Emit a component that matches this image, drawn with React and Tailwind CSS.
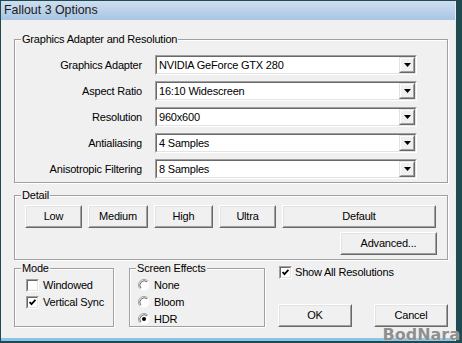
const outerSunken =
  'border border-t-[#a0a0a0] border-l-[#a0a0a0] border-b-white border-r-white';
const innerSunken =
  'border border-t-[#696969] border-l-[#696969] border-b-[#e3e3e3] border-r-[#e3e3e3]';

function DropButton() {
  return (
    <div className="w-[16px] h-full bg-[#f0f0f0] border border-t-[#e3e3e3] border-l-[#e3e3e3] border-b-[#696969] border-r-[#696969]">
      <div className="h-full flex items-center justify-center border border-t-white border-l-white border-b-[#a0a0a0] border-r-[#a0a0a0]">
        <svg width="7" height="4" viewBox="0 0 7 4">
          <polygon points="0,0 7,0 3.5,4" fill="#000" />
        </svg>
      </div>
    </div>
  );
}

function Combo({ value }) {
  return (
    <div className={`h-[20px] ${outerSunken}`}>
      <div className={`h-full flex bg-white ${innerSunken}`}>
        <span className="flex-1 pl-[2px] leading-[16px] text-[11px] tracking-[-0.2px] text-black">
          {value}
        </span>
        <DropButton />
      </div>
    </div>
  );
}

function Button({ children, className = '' }) {
  return (
    <div
      className={`h-[23px] bg-[#f0f0f0] border border-t-white border-l-white border-b-[#696969] border-r-[#696969] ${className}`}
    >
      <div className="h-full flex items-center justify-center border border-t-[#e3e3e3] border-l-[#e3e3e3] border-b-[#a0a0a0] border-r-[#a0a0a0] text-[11px] tracking-[-0.2px] text-black">
        {children}
      </div>
    </div>
  );
}

function CheckBox({ checked }) {
  return (
    <div className={`w-[13px] h-[13px] shrink-0 ${outerSunken}`}>
      <div className={`w-full h-full bg-white flex items-center justify-center ${innerSunken}`}>
        {checked && (
          <svg width="7" height="7" viewBox="0 0 7 7">
            <polyline points="0.5,3 2.5,5.2 6.5,0.8" fill="none" stroke="#000" strokeWidth="1.8" />
          </svg>
        )}
      </div>
    </div>
  );
}

function Radio({ checked }) {
  return (
    <svg width="12" height="12" viewBox="0 0 12 12" className="shrink-0">
      <circle cx="6" cy="6" r="5.5" fill="#fff" />
      <path d="M2.1 9.9 A5.5 5.5 0 0 1 9.9 2.1" fill="none" stroke="#a0a0a0" strokeWidth="1" />
      <path d="M2.9 9.1 A4.4 4.4 0 0 1 9.1 2.9" fill="none" stroke="#696969" strokeWidth="1" />
      {checked && <circle cx="6" cy="6" r="2" fill="#000" />}
    </svg>
  );
}

const legendCls =
  'ml-[6px] px-[1px] bg-[#f0f0f0] leading-[14px] text-[11px] tracking-[-0.2px] text-black';
const groupCls =
  'border border-[#a0a0a0] shadow-[inset_1px_1px_0_#fff,1px_1px_0_#fff]';

const rows = [
  ['Graphics Adapter', 'NVIDIA GeForce GTX 280'],
  ['Aspect Ratio', '16:10 Widescreen'],
  ['Resolution', '960x600'],
  ['Antialiasing', '4 Samples'],
  ['Anisotropic Filtering', '8 Samples'],
];

export default function App() {
  return (
    <div className="relative w-[462px] h-[343px] bg-[#1f4a50] pl-[1px] pr-[6px] pt-[1px] pb-[2px] font-['Liberation_Sans',Arial,sans-serif] overflow-hidden">
      <div className="h-full flex flex-col border-r border-r-[#e6ecef]">
        {/* title bar */}
        <div className="h-[19px] bg-gradient-to-b from-[#cddef0] to-[#a9c5e3] pl-[3px] leading-[19px] text-[12.4px] text-[#1b1b1b]">
          Fallout 3 Options
        </div>

        {/* client area */}
        <div className="h-[318px] bg-[#f0f0f0] pl-[13px] pt-[12px]">
          <fieldset className={`w-[434px] pb-[3px] ${groupCls}`}>
            <legend className={legendCls}>Graphics Adapter and Resolution</legend>
            <div className="grid grid-cols-[127px_262px] gap-x-[13px] gap-y-[6px] pt-[9px] items-center">
              {rows.map(([label, value]) => (
                <div key={label} className="contents">
                  <span className="text-right text-[11px] tracking-[-0.2px] text-black">{label}</span>
                  <Combo value={value} />
                </div>
              ))}
            </div>
          </fieldset>

          <fieldset className={`w-[434px] mt-[5px] pb-[4px] ${groupCls}`}>
            <legend className={legendCls}>Detail</legend>
            <div className="flex gap-[6px] pl-[10px] pt-[3px]">
              <Button className="w-[57px]">Low</Button>
              <Button className="w-[60px]">Medium</Button>
              <Button className="w-[59px]">High</Button>
              <Button className="w-[57px]">Ultra</Button>
              <Button className="w-[154px]">Default</Button>
            </div>
            <div className="flex justify-end pr-[10px] mt-[4px]">
              <Button className="w-[97px]">Advanced...</Button>
            </div>
          </fieldset>

          <div className="flex mt-[1px] w-[434px]">
            <fieldset className={`w-[100px] h-[66px] ${groupCls}`}>
              <legend className={legendCls}>Mode</legend>
              <div className="pl-[11px] pt-[2px]">
                <div className="h-[17px] flex items-center gap-[4px] text-[11px] tracking-[-0.2px]">
                  <CheckBox /> Windowed
                </div>
                <div className="h-[17px] flex items-center gap-[4px] text-[11px] tracking-[-0.2px]">
                  <CheckBox checked /> Vertical Sync
                </div>
              </div>
            </fieldset>

            <fieldset className={`w-[136px] h-[66px] ml-[15px] ${groupCls}`}>
              <legend className={legendCls}>Screen Effects</legend>
              <div className="pl-[8px] pt-[2px] flex flex-col gap-[1px]">
                <div className="h-[16px] flex items-center gap-[4px] text-[11px] tracking-[-0.2px]">
                  <Radio /> None
                </div>
                <div className="h-[16px] flex items-center gap-[4px] text-[11px] tracking-[-0.2px]">
                  <Radio /> Bloom
                </div>
                <div className="h-[16px] flex items-center gap-[4px] text-[11px] tracking-[-0.2px]">
                  <Radio checked /> HDR
                </div>
              </div>
            </fieldset>

            <div className="w-[170px] h-[66px] ml-[13px] flex flex-col justify-between">
              <div className="mt-[5px] pl-[1px] h-[13px] flex items-center gap-[3px] text-[11px] tracking-[-0.2px]">
                <CheckBox checked /> Show All Resolutions
              </div>
              <div className="flex justify-between">
                <Button className="w-[74px]">OK</Button>
                <Button className="w-[74px]">Cancel</Button>
              </div>
            </div>
          </div>
        </div>

        <div className="h-[3px] bg-[#8cc4e8]" />
      </div>

      {/* watermark */}
      <span className="absolute right-[2px] bottom-0 font-['DejaVu_Sans',sans-serif] font-bold text-[16px] leading-[16px] text-[#8f8f8f] [text-shadow:0_0_1px_#fff]">
        BodNara
      </span>
    </div>
  );
}
